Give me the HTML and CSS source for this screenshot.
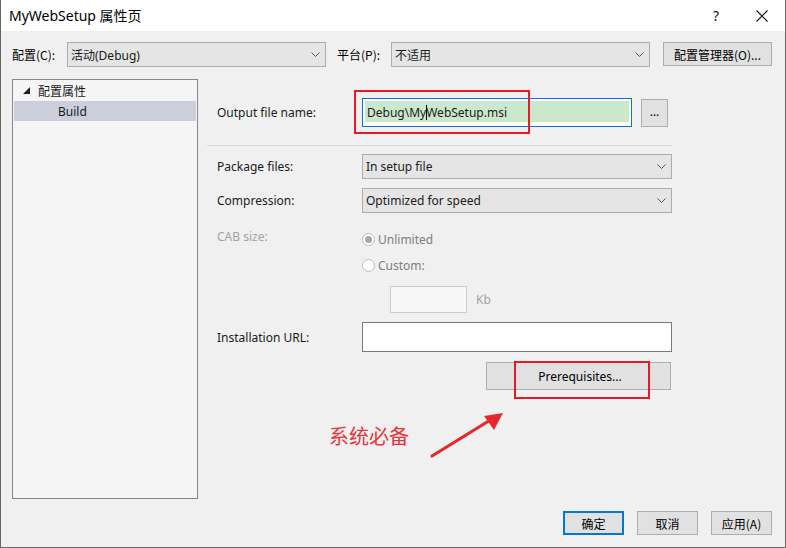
FILE: index.html
```html
<!DOCTYPE html>
<html lang="zh-CN">
<head>
<meta charset="utf-8">
<title>MyWebSetup 属性页</title>
<link rel="stylesheet" href="styles.css">
</head>
<body>
<div class="window">
  <div class="titlebar">
    <span class="title">MyWebSetup 属性页</span>
    <span class="tb-btn help">?</span>
    <span class="tb-btn close">
      <svg width="12" height="12" viewBox="0 0 12 12"><path d="M0.5 0.5 L11.5 11.5 M11.5 0.5 L0.5 11.5" stroke="#111" stroke-width="1.1" fill="none"/></svg>
    </span>
  </div>
  <div class="content">
    <div class="toprow">
      <span class="lbl lbl-config">配置(C):</span>
      <div class="combo combo-top">
        <span class="combo-text">活动(Debug)</span>
        <svg class="chev" width="9" height="5" viewBox="0 0 9 5"><path d="M0.5 0.5 L4.5 4.5 L8.5 0.5" stroke="#555" fill="none"/></svg>
      </div>
      <span class="lbl lbl-platform">平台(P):</span>
      <div class="combo combo-top">
        <span class="combo-text">不适用</span>
        <svg class="chev" width="9" height="5" viewBox="0 0 9 5"><path d="M0.5 0.5 L4.5 4.5 L8.5 0.5" stroke="#555" fill="none"/></svg>
      </div>
      <div class="btn btn-mgr">配置管理器(O)...</div>
    </div>

    <div class="main">
      <div class="tree">
        <div class="tree-item">
          <svg class="tri" width="7" height="7" viewBox="0 0 7 7"><polygon points="7,0 7,7 0,7" fill="#222"/></svg>
          <span>配置属性</span>
        </div>
        <div class="tree-item selected"><span class="child">Build</span></div>
      </div>

      <div class="props">
        <div class="row row-output">
          <span class="plabel">Output file name:</span>
          <div class="textbox focused">
            <span class="sel">Debug\My<span class="caret"></span>WebSetup.msi</span>
          </div>
          <div class="btn btn-browse">...</div>
        </div>
        <div class="separator"></div>

        <div class="row row-combo first">
          <span class="plabel">Package files:</span>
          <div class="combo combo-wide">
            <span class="combo-text">In setup file</span>
            <svg class="chev" width="9" height="5" viewBox="0 0 9 5"><path d="M0.5 0.5 L4.5 4.5 L8.5 0.5" stroke="#555" fill="none"/></svg>
          </div>
        </div>
        <div class="row row-combo">
          <span class="plabel">Compression:</span>
          <div class="combo combo-wide">
            <span class="combo-text">Optimized for speed</span>
            <svg class="chev" width="9" height="5" viewBox="0 0 9 5"><path d="M0.5 0.5 L4.5 4.5 L8.5 0.5" stroke="#555" fill="none"/></svg>
          </div>
        </div>

        <div class="row row-radio first">
          <span class="plabel disabled cab">CAB size:</span>
          <span class="radio checked"></span><span class="rlabel">Unlimited</span>
        </div>
        <div class="row row-radio">
          <span class="plabel"></span>
          <span class="radio"></span><span class="rlabel">Custom:</span>
        </div>
        <div class="row row-kb">
          <span class="plabel"></span>
          <div class="kbbox"></div>
          <span class="kb">Kb</span>
        </div>

        <div class="row row-url">
          <span class="plabel">Installation URL:</span>
          <div class="textbox url"></div>
        </div>
        <div class="row row-prereq">
          <div class="btn btn-prereq">Prerequisites...</div>
        </div>
      </div>
    </div>

    <div class="footer">
      <div class="btn btn-foot default">确定</div>
      <div class="btn btn-foot">取消</div>
      <div class="btn btn-foot">应用(A)</div>
    </div>
  </div>

  <div class="mark mark-output"></div>
  <div class="mark mark-prereq"></div>
  <div class="annot">系统必备</div>
  <svg class="arrow" width="90" height="60" viewBox="0 0 90 60">
    <path d="M6 51 L66 14" stroke="#e5282e" stroke-width="3.2" stroke-linecap="round" fill="none"/>
    <polygon points="77,8 58,11 68,25" fill="#e5282e"/>
  </svg>
</div>
</body>
</html>
```

FILE: styles.css
```css
* { box-sizing: border-box; }

html, body {
  margin: 0;
  padding: 0;
  background: #f0f0f0;
}

body {
  font-family: "Noto Sans", "Noto Sans CJK SC", sans-serif;
  font-size: 12px;
  color: #1a1a1a;
}

.window {
  position: relative;
  width: 786px;
  height: 548px;
  background: #f0f0f0;
  border-left: 1px solid #5f6b60;
  border-right: 1px solid #6a6a6a;
  border-bottom: 1px solid #6a6a6a;
  overflow: hidden;
}

/* title bar */
.titlebar {
  height: 31px;
  background: #ffffff;
  display: flex;
  align-items: center;
}

.title {
  flex: 1;
  padding-left: 8px;
  font-family: "Noto Sans", "Noto Sans CJK SC", sans-serif;
  font-size: 14px;
  color: #000;
  padding-bottom: 1px;
}

.tb-btn {
  width: 46px;
  height: 31px;
  display: flex;
  align-items: center;
  justify-content: center;
}

.help {
  font-size: 14px;
  color: #111;
}

/* content */
.content {
  padding: 11px 12px 0 11px;
}

.toprow {
  display: flex;
  align-items: center;
  height: 25px;
}

.lbl {
  font-family: "Noto Sans CJK SC", sans-serif;
  font-size: 12px;
  color: #000;
}

.lbl-config { width: 55px; }
.lbl-platform { width: 54px; margin-left: 11px; }

.combo {
  height: 25px;
  background: #e5e5e5;
  border: 1px solid #adadad;
  display: flex;
  align-items: center;
  padding: 0 5px 0 3px;
}

.combo-text {
  flex: 1;
  font-family: "Noto Sans", "Noto Sans CJK SC", sans-serif;
}

.combo-top { width: 259px; }

.chev { flex: none; }

.btn {
  background: #e1e1e1;
  border: 1px solid #adadad;
  display: flex;
  align-items: center;
  justify-content: center;
  color: #000;
}

.btn-mgr {
  width: 109px;
  height: 24px;
  margin-left: 13px;
  margin-top: -1px;
  font-family: "Noto Sans CJK SC", sans-serif;
}

/* main */
.main {
  display: flex;
  gap: 9px;
  margin-top: 12px;
  height: 420px;
}

.tree {
  width: 186px;
  background: #f5f5f5;
  border: 1px solid #828790;
  padding: 0 1px;
}

.tree-item {
  height: 20px;
  display: flex;
  align-items: center;
  padding-left: 9px;
  font-family: "Noto Sans CJK SC", sans-serif;
}

.tree-item .tri { margin-right: 8px; margin-top: 1px; }

.tree-item.selected {
  background: #cccedb;
  margin-top: 1px;
}

.child {
  padding-left: 35px;
  font-family: "Noto Sans", sans-serif;
}

.props {
  width: 465px;
  display: flex;
  flex-direction: column;
}

.row {
  display: flex;
  align-items: center;
  padding-left: 10px;
}

.plabel {
  width: 145px;
  flex: none;
}

.row-output {
  margin-top: 19px;
  height: 29px;
}

.textbox {
  height: 29px;
  background: #fff;
  border: 1px solid #7a7a7a;
}

.textbox.focused {
  width: 270px;
  border-color: #0078d7;
  padding: 2px 2px 4px 2px;
  display: flex;
}

.sel {
  flex: 1;
  background: #cce8cc;
  display: flex;
  align-items: center;
  padding-left: 2px;
  padding-top: 1px;
}

.caret {
  display: inline-block;
  width: 1px;
  height: 15px;
  background: #000;
  margin: 0 -1px 0 0;
}

.btn-browse {
  width: 27px;
  height: 28px;
  margin-left: 9px;
  padding-bottom: 3px;
}

.separator {
  height: 1px;
  background: #dadada;
  margin-top: 18px;
}

.row-combo {
  margin-top: 9px;
  height: 25px;
}
.row-combo.first { margin-top: 8px; }

.combo-wide {
  width: 310px;
}

.row-radio {
  height: 20px;
  margin-top: 6px;
}
.row-radio.first { margin-top: 16px; }

.plabel.disabled { color: #a3a3a3; }
.cab { align-self: flex-start; margin-top: -1px; }

.radio {
  width: 13px;
  height: 13px;
  border-radius: 50%;
  border: 1px solid #bcbcbc;
  background: #fff;
  display: flex;
  align-items: center;
  justify-content: center;
  margin-right: 3px;
}

.radio.checked::after {
  content: "";
  width: 7px;
  height: 7px;
  border-radius: 50%;
  background: #a8a8a8;
}

.rlabel {
  color: #7d7d7d;
}

.row-kb {
  margin-top: 11px;
  height: 27px;
}

.kbbox {
  width: 77px;
  height: 27px;
  margin-left: 28px;
  background: #f7f7f7;
  border: 1px solid #cccccc;
}

.kb {
  margin-left: 9px;
  color: #a3a3a3;
}

.row-url {
  margin-top: 9px;
  height: 30px;
}

.textbox.url {
  width: 310px;
  height: 30px;
}

.row-prereq {
  margin-top: 10px;
  justify-content: flex-end;
  padding-right: 1px;
}

.btn-prereq {
  width: 185px;
  height: 28px;
  padding-left: 3px;
}

/* footer */
.footer {
  display: flex;
  justify-content: flex-end;
  gap: 13px;
  margin-top: 12px;
  padding-right: 1px;
}

.btn-foot {
  width: 61px;
  height: 24px;
  font-family: "Noto Sans CJK SC", sans-serif;
}

.btn-foot.default {
  border: 2px solid #0078d7;
}

/* annotation overlays */
.mark {
  position: absolute;
  border: 2px solid #e81a2a;
}

.mark-output {
  left: 353px;
  top: 90px;
  width: 176px;
  height: 44px;
}

.mark-prereq {
  left: 513px;
  top: 361px;
  width: 136px;
  height: 38px;
}

.annot {
  position: absolute;
  left: 328px;
  top: 421px;
  font-family: "Noto Sans CJK SC", sans-serif;
  font-size: 20px;
  color: #e8343b;
}

.arrow {
  position: absolute;
  left: 425px;
  top: 405px;
}
```
